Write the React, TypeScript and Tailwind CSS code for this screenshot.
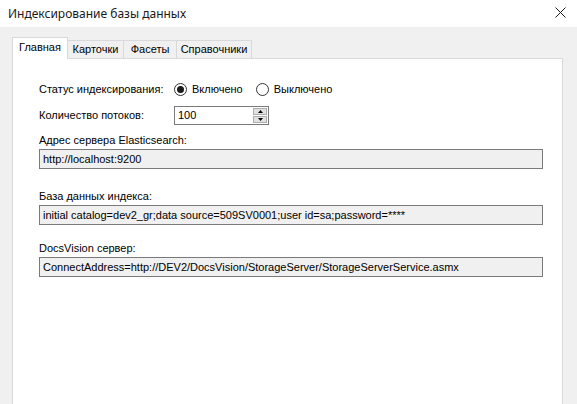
import React from "react";

const tabs = ["Главная", "Карточки", "Фасеты", "Справочники"];
const tabWidths = ["w-[56px]", "w-[57px]", "w-[54px]", "w-[76px]"];

function Radio({ checked, label }: { checked?: boolean; label: string }) {
  return (
    <div className="flex items-center">
      <span className="flex h-[13px] w-[13px] items-center justify-center rounded-full border border-[#333333] bg-white">
        {checked && <span className="h-[7px] w-[7px] rounded-full bg-[#1a1a1a]" />}
      </span>
      <span className="ml-[5px]">{label}</span>
    </div>
  );
}

function ReadonlyField({ label, value, mt }: { label: string; value: string; mt: string }) {
  return (
    <div className={mt}>
      <div className="h-[14px] leading-[14px]">{label}</div>
      <div className="mt-[2px] flex h-[20px] w-[504px] items-center border border-[#7a7a7a] bg-[#f0f0f0] pl-[3px] whitespace-nowrap">
        {value}
      </div>
    </div>
  );
}

export default function App() {
  return (
    <div
      className="h-[404px] w-[577px] overflow-hidden bg-[#f0f0f0] text-[11px] text-black"
      style={{ fontFamily: '"Liberation Sans", Arial, sans-serif' }}
    >
      <div className="flex h-[27px] items-center justify-between bg-white pl-[8px] pr-[11px]">
        <span className="text-[12px] text-[#1a1a1a]" style={{ fontFamily: '"Noto Sans", sans-serif' }}>
          Индексирование базы данных
        </span>
        <svg width="11" height="11" viewBox="0 0 11 11" className="mb-[3px]">
          <path d="M0.5 0.5 L10.5 10.5 M10.5 0.5 L0.5 10.5" stroke="#1a1a1a" strokeWidth="1" />
        </svg>
      </div>

      <div className="pl-[12px] pt-[10px]">
        <div className="flex h-[21px] items-end">
          {tabs.map((t, i) =>
            i === 0 ? (
              <div
                key={t}
                className={`relative z-10 -mb-px flex h-[22px] items-center justify-center border border-b-0 border-[#d9d9d9] bg-white pb-[2px] ${tabWidths[i]}`}
              >
                {t}
              </div>
            ) : (
              <div
                key={t}
                className={`-ml-px flex h-[18px] items-center justify-center border border-b-0 border-[#d9d9d9] bg-[#f0f0f0] ${tabWidths[i]}`}
              >
                {t}
              </div>
            )
          )}
        </div>

        <div className="h-[360px] w-[551px] border border-[#d9d9d9] bg-white pl-[26px] pt-[20px]">
          <div className="flex h-[20px] items-center">
            <span className="w-[135px]">Статус индексирования:</span>
            <Radio checked label="Включено" />
            <span className="ml-[13px]">
              <Radio label="Выключено" />
            </span>
          </div>

          <div className="mt-[7px] flex h-[19px] items-center">
            <span className="w-[135px]">Количество потоков:</span>
            <div className="flex h-[19px] w-[95px] items-center justify-between border border-[#7a7a7a] bg-white pl-[3px] pr-px">
              <span>100</span>
              <div className="flex h-[15px] w-[14px] flex-col gap-px">
                <div className="flex flex-1 items-center justify-center border border-[#adadad] bg-[#e1e1e1]">
                  <svg width="5" height="3" viewBox="0 0 5 3">
                    <path d="M2.5 0 L5 3 L0 3 Z" fill="#000" />
                  </svg>
                </div>
                <div className="flex flex-1 items-center justify-center border border-[#adadad] bg-[#e1e1e1]">
                  <svg width="5" height="3" viewBox="0 0 5 3">
                    <path d="M0 0 L5 0 L2.5 3 Z" fill="#000" />
                  </svg>
                </div>
              </div>
            </div>
          </div>

          <ReadonlyField mt="mt-[8px]" label="Адрес сервера Elasticsearch:" value="http://localhost:9200" />
          <ReadonlyField
            mt="mt-[20px]"
            label="База данных индекса:"
            value="initial catalog=dev2_gr;data source=509SV0001;user id=sa;password=****"
          />
          <ReadonlyField
            mt="mt-[16px]"
            label="DocsVision сервер:"
            value="ConnectAddress=http://DEV2/DocsVision/StorageServer/StorageServerService.asmx"
          />
        </div>
      </div>
    </div>
  );
}
